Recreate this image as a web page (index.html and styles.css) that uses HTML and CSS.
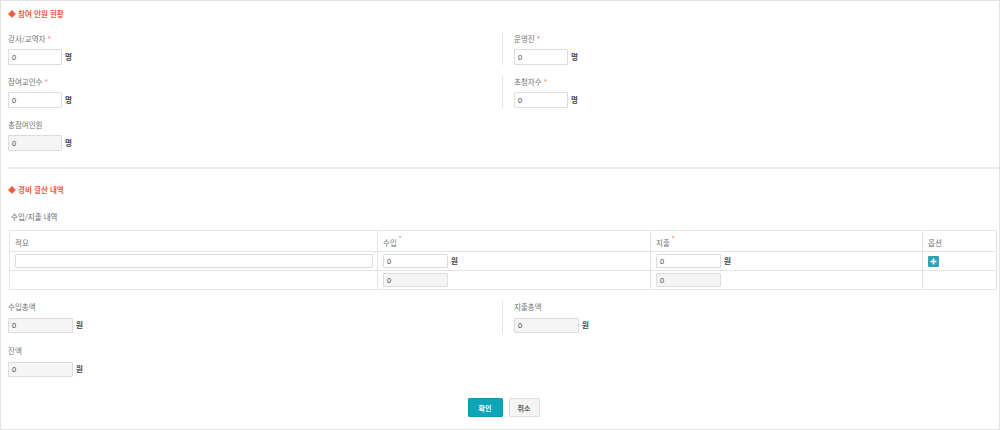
FILE: index.html
```html
<!DOCTYPE html>
<html lang="ko">
<head>
<meta charset="utf-8">
<link rel="stylesheet" href="styles.css">
</head>
<body>
<div class="page">
  <div class="sec-title"><span class="dia">◆</span> 참여 인원 현황</div>
  <div class="grid">
    <div class="col">
      <div class="field">
        <div class="label">강사/교역자 <span class="req">*</span></div>
        <div class="ctrl"><span class="inp">0</span><span class="unit">명</span></div>
      </div>
    </div>
    <div class="col right">
      <div class="field">
        <div class="label">운영진 <span class="req">*</span></div>
        <div class="ctrl"><span class="inp">0</span><span class="unit">명</span></div>
      </div>
    </div>
    <div class="col">
      <div class="field">
        <div class="label">참여교인수 <span class="req">*</span></div>
        <div class="ctrl"><span class="inp">0</span><span class="unit">명</span></div>
      </div>
    </div>
    <div class="col right">
      <div class="field">
        <div class="label">초청자수 <span class="req">*</span></div>
        <div class="ctrl"><span class="inp">0</span><span class="unit">명</span></div>
      </div>
    </div>
    <div class="col">
      <div class="field">
        <div class="label">총참여인원</div>
        <div class="ctrl"><span class="inp ro">0</span><span class="unit">명</span></div>
      </div>
    </div>
  </div>

  <div class="divider"></div>

  <div class="sec-title t2"><span class="dia">◆</span> 경비 결산 내역</div>
  <div class="sub">수입/지출 내역</div>
  <table class="tbl">
    <colgroup><col class="c1"><col class="c2"><col class="c3"><col class="c4"></colgroup>
    <thead>
      <tr><th><div class="hcell">적요</div></th><th><div class="hcell">수입 <sup class="req">*</sup></div></th><th><div class="hcell">지출 <sup class="req">*</sup></div></th><th><div class="hcell">옵션</div></th></tr>
    </thead>
    <tbody>
      <tr>
        <td><div class="cell"><span class="inp wide"></span></div></td>
        <td><div class="cell"><span class="inp tin">0</span><span class="unit">원</span></div></td>
        <td><div class="cell"><span class="inp tin">0</span><span class="unit">원</span></div></td>
        <td><div class="cell"><svg class="plus" width="11" height="11" viewBox="0 0 11 11"><rect width="11" height="11" rx="1" fill="#2fa2b4"/><path d="M5.5 2.5v6M2.5 5.5h6" stroke="#fff" stroke-width="1.6"/></svg></div></td>
      </tr>
      <tr>
        <td><div class="cell"></div></td>
        <td><div class="cell"><span class="inp tin ro">0</span></div></td>
        <td><div class="cell"><span class="inp tin ro">0</span></div></td>
        <td><div class="cell"></div></td>
      </tr>
    </tbody>
  </table>

  <div class="grid g2">
    <div class="col">
      <div class="field">
        <div class="label">수입총액</div>
        <div class="ctrl"><span class="inp ro w64">0</span><span class="unit">원</span></div>
      </div>
    </div>
    <div class="col right">
      <div class="field">
        <div class="label">지출총액</div>
        <div class="ctrl"><span class="inp ro w64">0</span><span class="unit">원</span></div>
      </div>
    </div>
    <div class="col">
      <div class="field">
        <div class="label">잔액</div>
        <div class="ctrl"><span class="inp ro w64">0</span><span class="unit">원</span></div>
      </div>
    </div>
  </div>

  <div class="btns">
    <span class="btn ok">확인</span>
    <span class="btn cancel">취소</span>
  </div>
</div>
</body>
</html>
```

FILE: styles.css
```css
* { box-sizing: border-box; }
html, body { margin: 0; padding: 0; background: #fff; }
body { font-family: "Noto Sans CJK KR", "Noto Sans", sans-serif; color: #666; }
.page {
  width: 1000px;
  height: 430px;
  border: 1px solid #e2e2e2;
  padding: 7px 0 0 7px;
}
.sec-title {
  font-size: 7.5px;
  line-height: 12px;
  height: 12px;
  font-weight: bold;
  color: #ef5b45;
}
.sec-title .dia { font-size: 8px; }
.grid {
  display: grid;
  grid-template-columns: 494px 1fr;
  row-gap: 11px;
  margin-top: 13px;
}
.col.right { border-left: 1px solid #e3e3e3; padding-left: 11px; }
.field { height: 32px; display: flex; flex-direction: column; }
.label { font-size: 7.5px; line-height: 12px; height: 12px; color: #737373; }
.req { color: #f06a4c; }
.ctrl { display: flex; align-items: center; margin-top: 4px; height: 16px; }
.inp {
  display: inline-flex;
  align-items: center;
  flex: none;
  width: 54px;
  height: 16px;
  border: 1px solid #dcdcdc;
  border-radius: 1px;
  padding-left: 3px;
  font-family: "Liberation Sans", sans-serif;
  font-size: 7.5px;
  color: #444;
  background: #fff;
}
.inp.ro { background: #f5f5f5; }
.inp.w64 { width: 65px; height: 15px; }
.unit { font-size: 7.5px; font-weight: bold; color: #444; margin-left: 3px; line-height: 10px; }
.divider { height: 2px; background: #ececec; margin-top: 16px; }
.t2 { margin-top: 15px; }
.sub { font-size: 7.5px; line-height: 12px; height: 12px; color: #666; margin: 15px 0 0 3px; }
.tbl {
  margin: 7px 0 0 1px;
  width: 987px;
  border-collapse: collapse;
  table-layout: fixed;
  border: 1px solid #e1e1e1;
}
.c1 { width: 368px; } .c2 { width: 273px; } .c3 { width: 272px; } .c4 { width: 74px; }
.tbl th, .tbl td { border: 1px solid #e4e4e4; padding: 0; text-align: left; font-weight: normal; }
.hcell {
  height: 20px;
  display: flex;
  align-items: flex-end;
  padding: 0 0 3px 5px;
  font-size: 7.5px;
  line-height: 10px;
  color: #777;
}
.hcell sup { font-size: 6px; line-height: 6px; align-self: flex-start; margin: 5px 0 0 2px; }
.cell {
  height: 18px;
  display: flex;
  align-items: center;
  padding-left: 5px;
}
.inp.wide { width: 358px; height: 14px; }
.inp.tin { width: 65px; height: 14px; }
.plus { display: block; }
.g2 { margin-top: 11px; row-gap: 12px; }
.btns { display: flex; justify-content: center; gap: 6px; margin-top: 21px; }
.btn {
  height: 19px;
  display: inline-flex;
  align-items: center;
  justify-content: center;
  font-size: 7px;
  font-weight: bold;
  border-radius: 1px;
}
.btn.ok { width: 35px; background: #0ea4b7; color: #fff; border: 1px solid #0a9aad; }
.btn.cancel { width: 31px; background: #f4f4f4; color: #555; border: 1px solid #dedede; }
```
